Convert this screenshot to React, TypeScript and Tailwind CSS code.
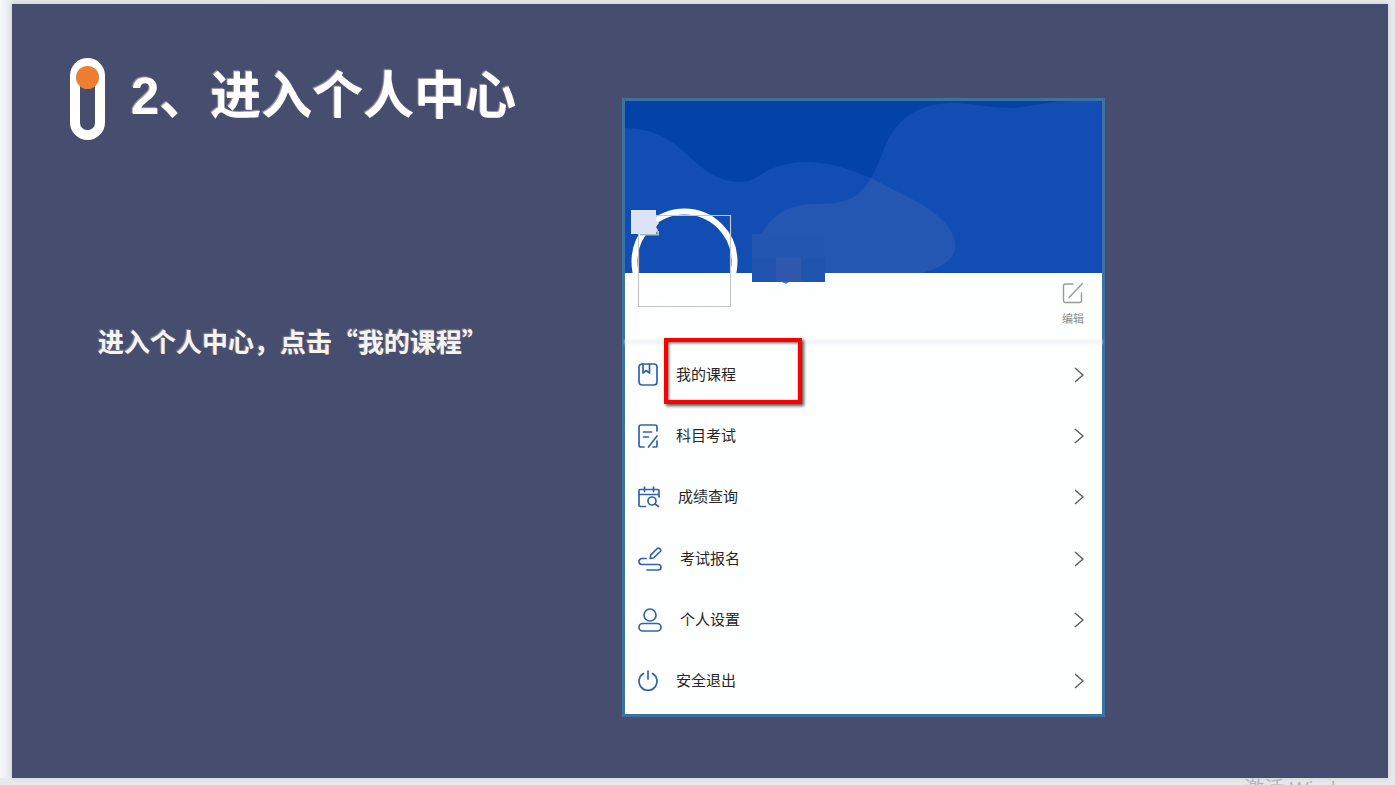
import type { ReactNode } from 'react'

type MenuItem = {
  label: string
  icon: ReactNode
  highlighted?: boolean
}

const MENU_ITEMS: MenuItem[] = [
  { label: '我的课程', icon: <CourseIcon />, highlighted: true },
  { label: '科目考试', icon: <ExamIcon /> },
  { label: '成绩查询', icon: <ScoreIcon /> },
  { label: '考试报名', icon: <SignUpIcon /> },
  { label: '个人设置', icon: <UserIcon /> },
  { label: '安全退出', icon: <PowerIcon /> },
]

export default function App() {
  return (
    <div className="flex h-screen flex-col overflow-hidden bg-[#e7eaeb] font-['Liberation_Sans','Noto_Sans_CJK_SC',sans-serif]">
      <div className="flex min-h-0 flex-1 bg-linear-to-r from-[#f6f8fa] from-0% via-[#e2e6e6] via-1% to-[#e7eaeb] pt-1 pr-[7px] pl-3">
        <main className="grid flex-1 grid-cols-[610fr_483fr_283fr] items-start bg-[#474d6e] shadow-[0_0_5px_#c9cdd0]">
          <section className="pt-[54px] pl-[58px]">
            <div className="flex items-center gap-[26px]">
              <PinLogo />
              <h1 className="pb-1 text-[51px] leading-[76px] font-bold whitespace-nowrap text-white [text-shadow:-1px_-1px_1px_#a5a5a5]">
                2、进入个人中心
              </h1>
            </div>
            <p className="mt-[181px] ml-7 font-['Noto_Sans_CJK_SC',sans-serif] text-[26px] leading-[40px] font-bold whitespace-nowrap text-[#f4f4f4] [text-shadow:-1px_-1px_1px_#85858c]">
              进入个人中心，点击“我的课程”
            </p>
          </section>
          <PersonalCenter />
        </main>
      </div>
      <footer className="h-[7px] overflow-hidden pr-6 text-right text-[20px] leading-[23px] text-[#b4b6b8]">
        激活 Windows
      </footer>
    </div>
  )
}

function PersonalCenter() {
  return (
    <section className="mt-[94px] border-[3px] border-[#3d71a1] bg-[#fdfefe]">
      <div className="relative">
        <Banner />
        <Avatar />
        <NameBlock />
        <div className="flex h-[67px] justify-end pt-[9px] pr-[18px]">
          <button type="button" className="flex flex-col items-center gap-[6px] text-[11px] leading-[18px] text-[#8b8b8b]">
            <EditIcon />
            编辑
          </button>
        </div>
      </div>
      <div className="h-1 bg-[#f3f5f8] shadow-[0_0_3px_#f3f5f8]" />
      <nav className="flex h-[370px] flex-col pb-[2px]">
        {MENU_ITEMS.map((item) => (
          <button
            key={item.label}
            type="button"
            className="relative flex flex-1 items-center gap-[18px] pr-[18px] pl-[13px] text-left text-[15px] leading-5 text-[#262626]"
          >
            {item.icon}
            <span className="flex-1">{item.label}</span>
            <ChevronIcon />
            {item.highlighted && (
              <span className="absolute -top-[6px] left-[39px] h-[66px] w-[138px] border-4 border-[#fe0000] shadow-[2px_2px_3px_#555,inset_1px_1px_3px_#666]" />
            )}
          </button>
        ))}
      </nav>
    </section>
  )
}

function Banner() {
  return (
    <svg viewBox="0 0 477 172" preserveAspectRatio="none" className="block h-[172px] w-full" aria-hidden="true">
      <path d="M0 0H477V172H0Z" fill="#0343a7" />
      <path
        d="M0 27C24 27 43 36 58 50C76 66 90 81 116 81C135 81 139 61 184 61C210 62 225 69 246 77C258 57 259 38 275 22C292 4 315 2 332 2C352 3 366 7 388 7C410 5 425 0 445 0H477V172H0Z"
        fill="#114db2"
      />
      <path
        d="M246 77C264 87 286 96 302 107C322 120 332 134 330 148C328 160 314 168 296 172H137V132C148 112 166 103 190 103C220 103 234 98 246 77Z"
        fill="#2457b1"
      />
    </svg>
  )
}

// Ring, selection frame and the mosaic patch over its corner.
function Avatar() {
  return (
    <svg viewBox="0 0 110 104" className="absolute top-[106px] left-[5px] h-[104px] w-[110px]" aria-hidden="true">
      <circle cx="54.5" cy="54.5" r="50" fill="none" stroke="#fff" strokeWidth="6" />
      <path d="M8.5 8.5H100.5V99.5H8.5Z" fill="none" stroke="#c4c6c9" strokeWidth="1.2" />
      <path d="M10 27.500H28V24" fill="none" stroke="#9dbfb4" strokeWidth="2" />
      <path d="M1 3H26V27H1Z" fill="#dbe3f5" />
      <path d="M26 13l3 3-3 4 2 3-2 3z" fill="#dbe3f5" />
    </svg>
  )
}

function NameBlock() {
  return (
    <svg viewBox="0 0 73 50" className="absolute top-[133px] left-[127px] h-[50px] w-[73px]" aria-hidden="true">
      <path d="M0 0H73V48H0Z" fill="#2356b0" />
      <path d="M0 24H73V48H0Z" fill="#2154ae" />
      <path d="M24 24H49V48H24Z" fill="#2f58af" />
      <path d="M30 48h7l-3 2z" fill="#5f80cf" />
    </svg>
  )
}

function PinLogo() {
  return (
    <svg viewBox="0 0 35 82" className="h-[82px] w-[35px] shrink-0" aria-hidden="true">
      <rect width="35" height="82" rx="17.500" fill="#fff" />
      <rect x="10" y="14" width="15" height="58" rx="7" fill="#474d6e" />
      <circle cx="17.500" cy="19.500" r="11.500" fill="#ed7d31" />
    </svg>
  )
}

function LineIcon({ className, viewBox, children }: { className: string; viewBox: string; children: ReactNode }) {
  return (
    <svg
      viewBox={viewBox}
      className={`shrink-0 ${className}`}
      fill="none"
      stroke="#3463ab"
      strokeWidth="1.7"
      strokeLinecap="round"
      strokeLinejoin="round"
      aria-hidden="true"
    >
      {children}
    </svg>
  )
}

function CourseIcon() {
  return (
    <LineIcon viewBox="0 0 20 23" className="h-[23px] w-5">
      <rect x="1" y="1" width="18" height="21" rx="3" />
      <path d="M5 1V10L8.200 7.500L11.500 10V1" />
    </LineIcon>
  )
}

function ExamIcon() {
  return (
    <LineIcon viewBox="0 0 20 24" className="h-6 w-5">
      <path d="M19 7V3Q19 1 17 1H3Q1 1 1 3V21Q1 23 3 23H6" />
      <path d="M5.500 8H13.500M5.500 13H10.500" />
      <path d="M19 12L10.500 23M19 17V22Q19 23 18 23H15" />
    </LineIcon>
  )
}

function ScoreIcon() {
  return (
    <LineIcon viewBox="0 0 22 22" className="h-[22px] w-[22px]">
      <path d="M7.500 20.500H2.500Q1 20.500 1 19V4.500Q1 3.500 2 3.500H20Q21 3.500 21 4.500V11M1 8.500H21" />
      <path d="M6.500 1V5.500M15.500 1V5.500" />
      <circle cx="14" cy="15" r="4" />
      <path d="M17 18L20.500 20.500" />
    </LineIcon>
  )
}

function SignUpIcon() {
  return (
    <LineIcon viewBox="0 0 24 24" className="h-6 w-6">
      <path d="M12.200 11.300L12.700 8.200L19.200 1.500Q20.300 .6 21.500 1.500L22.300 2.300Q23.300 3.500 22.300 4.500L15.500 11Z" />
      <path d="M8 11.500H4A3 3 0 0 0 4 17.500H20.200A2.700 2.700 0 0 1 20.200 23H9" />
    </LineIcon>
  )
}

function UserIcon() {
  return (
    <LineIcon viewBox="0 0 24 24" className="h-6 w-6">
      <circle cx="12" cy="7" r="6" />
      <rect x="1" y="15.500" width="22" height="7.500" rx="3.700" />
    </LineIcon>
  )
}

function PowerIcon() {
  return (
    <LineIcon viewBox="0 0 20 22" className="h-[22px] w-5">
      <path d="M10 1V9" />
      <path d="M5.500 3.500A9 9 0 1 0 14.500 3.500" />
    </LineIcon>
  )
}

function EditIcon() {
  return (
    <svg viewBox="0 0 22 22" className="h-[22px] w-[22px]" fill="none" stroke="#999" strokeWidth="1.400" strokeLinecap="round" aria-hidden="true">
      <path d="M11 2H3.500Q1.500 2 1.500 4V18.500Q1.500 20.500 3.500 20.500H17.500Q19.500 20.500 19.500 18.500V11" />
      <path d="M7 15.500L20.500 1.500" />
    </svg>
  )
}

function ChevronIcon() {
  return (
    <svg viewBox="0 0 10 16" className="h-4 w-[10px] shrink-0" fill="none" stroke="#606060" strokeWidth="1.500" aria-hidden="true">
      <path d="M1 1L9 8L1 15" />
    </svg>
  )
}
